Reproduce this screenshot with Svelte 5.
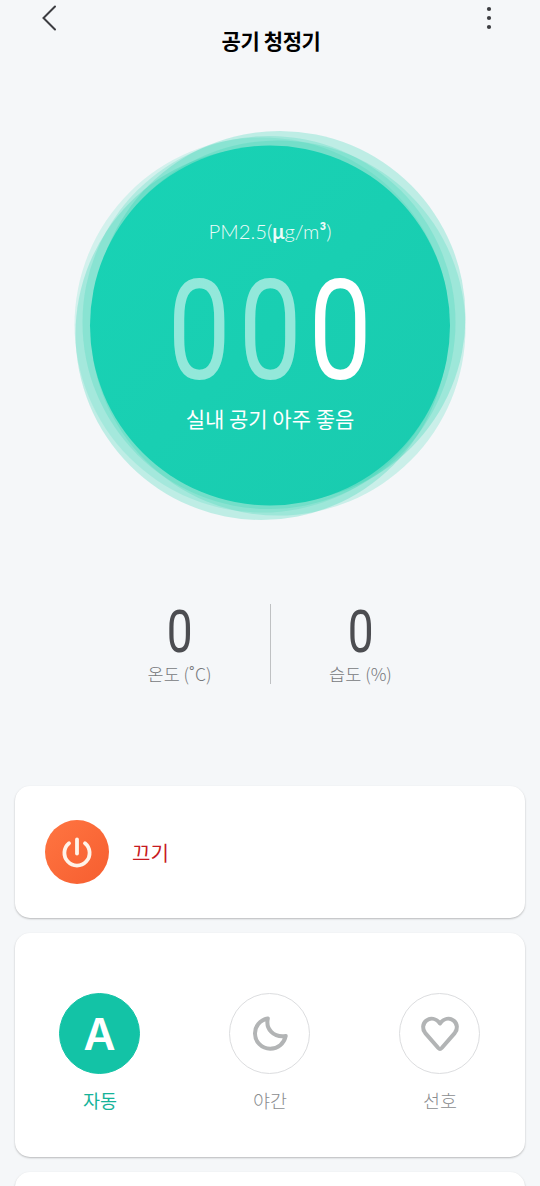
<script lang="ts">
  let pm = 0;
  let temperature = 0;
  let humidity = 0;
  let mode = 'auto';

  const modes = [
    { id: 'auto', label: '자동' },
    { id: 'night', label: '야간' },
    { id: 'favorite', label: '선호' }
  ];

  // Leading zeros are drawn dimmed
  function getDigits(value: number) {
    const text = value.toString();
    return text.padStart(3, '0').split('').map((digit, i) => ({
      digit,
      dim: i < 3 - text.length
    }));
  }
</script>

<div class="screen">
  <header>
    <button class="icon-button" aria-label="뒤로">
      <svg width="16" height="28" viewBox="0 0 16 28">
        <path d="M14 2.5 2.5 14 14 25.5" fill="none" stroke="#3c3d41" stroke-width="2" stroke-linecap="round" />
      </svg>
    </button>
    <h1>공기 청정기</h1>
    <button class="icon-button" aria-label="메뉴">
      <svg width="6" height="24" viewBox="0 0 6 24" fill="#3c3d41">
        <circle cx="3" cy="3" r="2.1" />
        <circle cx="3" cy="12" r="2.1" />
        <circle cx="3" cy="21" r="2.1" />
      </svg>
    </button>
  </header>

  <section class="gauge">
    <svg class="rings" width="400" height="400" viewBox="70 126 400 400">
      <defs>
        <linearGradient id="air" x1="0" y1="0" x2="1" y2="1">
          <stop offset="0" stop-color="#18d3b5" />
          <stop offset="1" stop-color="#1acbaf" />
        </linearGradient>
      </defs>
      <g fill="#12cda7">
        <circle cx="278" cy="328" r="187.5" fill-opacity="0.19" />
        <circle cx="262" cy="325" r="187.5" fill-opacity="0.15" />
        <circle cx="261.5" cy="334" r="186" fill-opacity="0.24" />
        <circle cx="269" cy="322.5" r="186.5" fill-opacity="0.18" />
        <circle cx="280" cy="316.5" r="185.5" fill-opacity="0.24" />
      </g>
      <circle cx="270" cy="325.5" r="180" fill="url(#air)" />
    </svg>
    <div class="reading">
      <div class="unit">PM2.5(<b>μ</b>g/m<b>³</b>)</div>
      <div class="digits">
        {#each getDigits(pm) as item}
          <span class:dim={item.dim}>{item.digit}</span>
        {/each}
      </div>
      <div class="quality">실내 공기 아주 좋음</div>
    </div>
  </section>

  <section class="stats">
    <div class="stat">
      <div class="value">{temperature}</div>
      <div class="label">온도 (˚C)</div>
    </div>
    <div class="divider"></div>
    <div class="stat">
      <div class="value">{humidity}</div>
      <div class="label">습도 (%)</div>
    </div>
  </section>

  <section class="card power">
    <button class="power-button" aria-label="끄기">
      <svg width="32" height="32" viewBox="0 0 32 32" fill="none" stroke="#fff3e8" stroke-width="3.8" stroke-linecap="round">
        <path d="M8 7.2A12.6 12.6 0 1 0 24 7.2" />
        <path d="M16 3.5v14" />
      </svg>
    </button>
    <span>끄기</span>
  </section>

  <section class="card modes">
    {#each modes as item}
      <button class="mode" class:active={mode === item.id} onclick={() => (mode = item.id)}>
        <span class="mode-icon">
          {#if item.id === 'auto'}
            A
          {:else if item.id === 'night'}
            <svg width="38" height="38" viewBox="0 0 38 38">
              <path d="M16.8 3.5C8.5 5 4 11.5 4 18.3A15.2 15.2 0 0 0 19.2 33.7C27 33.7 33 28.5 34.7 21C22.5 22.8 14.5 14 16.8 3.5Z" />
            </svg>
          {:else}
            <svg width="40" height="38" viewBox="0 0 40 38">
              <path d="M20 8.5C16 3.2 10.5 2.6 6.3 5.6C2.4 8.8 2.1 14.2 5.3 18.1L18.3 33Q20 34.8 21.7 33L34.7 18.1C37.9 14.2 37.6 8.8 33.7 5.6C29.5 2.6 24 3.2 20 8.5Z" />
            </svg>
          {/if}
        </span>
        <span class="mode-label">{item.label}</span>
      </button>
    {/each}
  </section>

  <section class="card next"></section>
</div>

<style>
  :global(body) {
    background: #f5f7f9;
  }

  .screen {
    box-sizing: border-box;
    height: 1186px;
    overflow: hidden;
    background: #f5f7f9;
    font-family: "Noto Sans CJK KR", sans-serif;
  }

  button {
    margin: 0;
    padding: 0;
    border: 0;
    background: none;
    font-family: inherit;
  }

  header {
    display: flex;
    justify-content: space-between;
    align-items: flex-start;
    height: 56px;
    padding: 4px 48px 0 41px;
    box-sizing: border-box;
  }

  .icon-button {
    display: flex;
    width: 16px;
    height: 28px;
    align-items: center;
  }

  header .icon-button:last-child {
    width: 6px;
  }

  h1 {
    margin: 21px 0 0 -1px;
    font-size: 21px;
    line-height: 30px;
    font-weight: 700;
    letter-spacing: -0.4px;
    color: #000;
  }

  .gauge {
    display: grid;
    justify-content: center;
    margin-top: 70px;
    height: 400px;
  }

  .rings,
  .reading {
    grid-area: 1 / 1;
  }

  .reading {
    display: flex;
    flex-direction: column;
    align-items: center;
    z-index: 1;
    color: #fff;
  }

  .unit {
    margin-top: 91px;
    font-family: Lato, sans-serif;
    font-weight: 300;
    font-size: 20.3px;
    line-height: 28px;
    opacity: 0.92;
  }

  .unit b {
    font-weight: 700;
  }

  .digits {
    display: flex;
    margin-top: 20px;
    height: 132px;
    font-family: Roboto, sans-serif;
    font-size: 140px;
    line-height: 132px;
  }

  .digits span {
    width: 70.5px;
    display: flex;
    justify-content: center;
    transform: scaleX(0.8);
  }

  .dim {
    opacity: 0.53;
  }

  .quality {
    margin-top: 6px;
    font-size: 21px;
    line-height: 30px;
  }

  .stats {
    display: flex;
    justify-content: center;
    margin-top: 78px;
    height: 80px;
  }

  .stat {
    display: flex;
    flex-direction: column;
    align-items: center;
    width: 180px;
  }

  .divider {
    width: 1px;
    height: 80px;
    background: #bfc1c3;
  }

  .value {
    margin-top: 1px;
    font-family: Roboto, sans-serif;
    font-size: 59px;
    line-height: 54px;
    color: #4c4d51;
    transform: scaleX(0.78);
  }

  .label {
    margin-top: 2px;
    font-size: 17.5px;
    line-height: 26px;
    font-weight: 300;
    color: #77797c;
  }

  .card {
    box-sizing: border-box;
    margin: 0 15px 15px;
    border-radius: 15px;
    background: #fff;
    box-shadow: 0 1px 2px rgba(0, 0, 0, 0.25);
  }

  .power {
    display: flex;
    align-items: center;
    gap: 23px;
    margin-top: 102px;
    height: 132px;
    padding-left: 30px;
    font-size: 20px;
    color: #c71a22;
  }

  .power-button {
    display: flex;
    align-items: center;
    justify-content: center;
    width: 64px;
    height: 64px;
    border-radius: 50%;
    background: linear-gradient(135deg, #ff7541, #f65e30);
  }

  .modes {
    display: flex;
    justify-content: space-around;
    align-items: flex-start;
    height: 224px;
    padding-top: 60px;
  }

  .mode {
    display: flex;
    flex-direction: column;
    align-items: center;
    width: 82px;
    color: #8b8d8f;
  }

  .mode-icon {
    display: flex;
    align-items: center;
    justify-content: center;
    box-sizing: border-box;
    width: 81px;
    height: 81px;
    margin-right: 1px;
    border: 1px solid #dcdddf;
    border-radius: 50%;
    font-family: Inter, sans-serif;
    font-size: 44px;
    font-weight: 600;
    color: #fff;
  }

  .mode-icon svg {
    fill: none;
    stroke: #b2b4b5;
    stroke-width: 4;
    stroke-linejoin: round;
  }

  .mode-label {
    margin-top: 12px;
    font-size: 18.5px;
    line-height: 28px;
    font-weight: 300;
  }

  .active {
    color: #16b399;
  }

  .active .mode-icon {
    border-color: #13c3a6;
    background: #13c3a6;
  }

  .active .mode-label {
    font-weight: 400;
  }

  .next {
    height: 80px;
  }
</style>
